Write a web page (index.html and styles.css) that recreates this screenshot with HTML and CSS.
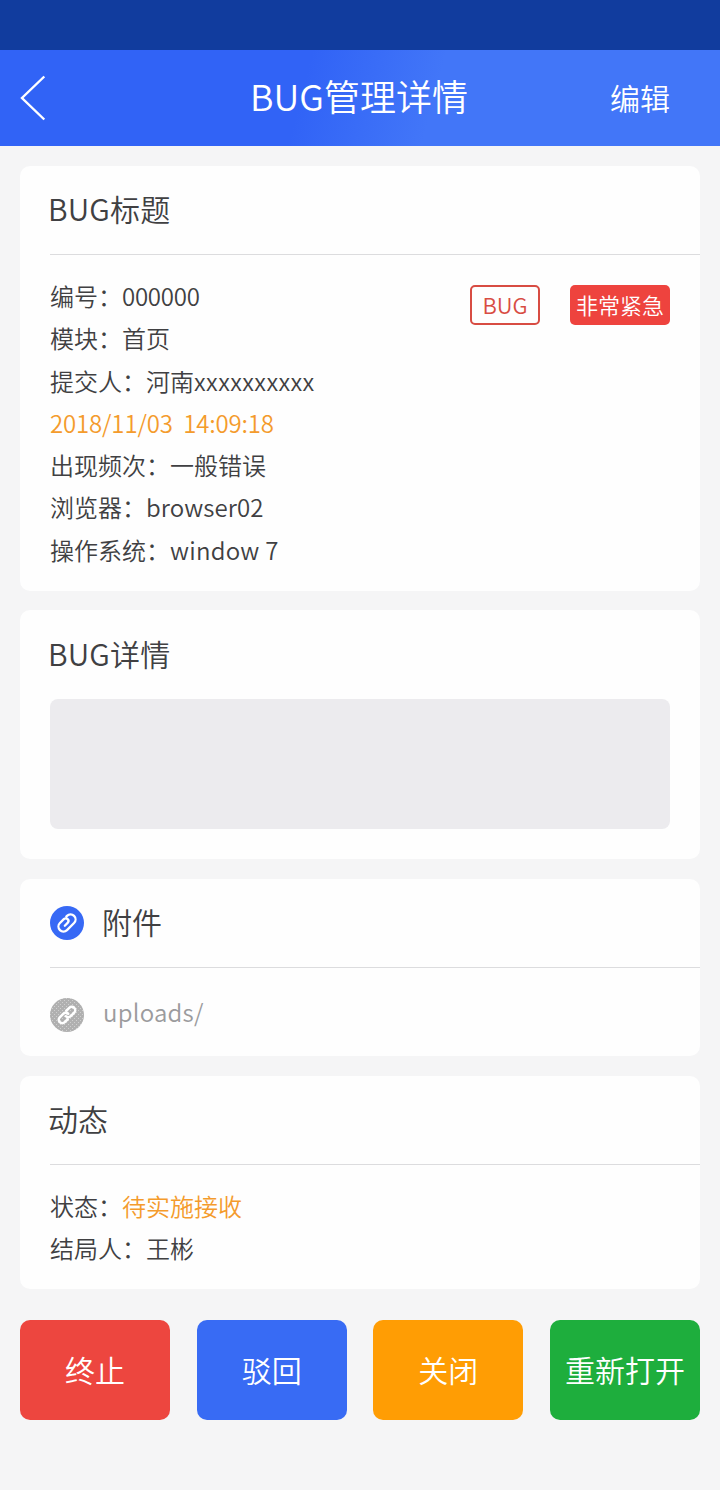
FILE: index.html
```html
<!DOCTYPE html>
<html lang="zh-CN">
<head>
<meta charset="utf-8">
<title>BUG管理详情</title>
<link rel="stylesheet" href="styles.css">
</head>
<body>
<div class="status-bar"></div>
<header class="nav">
  <svg class="back" viewBox="0 0 26 46" fill="none" stroke="#fff" stroke-width="2.4"><path d="M24.3 1.500 2 23l22.3 21.5"/></svg>
  <h1>BUG管理详情</h1>
  <span class="edit">编辑</span>
</header>
<main>
  <section class="card card-info">
    <h2>BUG标题</h2>
    <div class="body">
      <div class="rows">
        <p>编号：<span class="number">000000</span></p>
        <p>模块：首页</p>
        <p>提交人：河南<span class="submitter">xxxxxxxxxx</span></p>
        <p class="orange time">2018/11/03&nbsp; 14:09:18</p>
        <p>出现频次：一般错误</p>
        <p>浏览器：<span class="browser">browser02</span></p>
        <p>操作系统：<span class="os">window 7</span></p>
      </div>
      <div class="tags">
        <span class="tag outline">BUG</span>
        <span class="tag urgent">非常紧急</span>
      </div>
    </div>
  </section>
  <section class="card card-detail">
    <h2>BUG详情</h2>
    <div class="detail-box"></div>
  </section>
  <section class="card card-files">
    <h2 class="with-icon">
      <svg class="round" viewBox="0 0 34 34"><circle cx="17" cy="17" r="17" fill="#3769f5"/><path transform="rotate(-45 17 17)" d="M21 12H22a5 5 0 0 1 0 10H12a5 5 0 0 1 0-10h5.500a2.700 2.700 0 0 1 0 5.400H13.500" fill="none" stroke="#fff" stroke-width="2.300" stroke-linecap="round"/></svg>
      <span>附件</span>
    </h2>
    <div class="file">
      <svg class="round" viewBox="0 0 34 34">
        <defs><pattern id="dots" width="4" height="4" patternUnits="userSpaceOnUse"><rect width="4" height="4" fill="#b0b0b0"/><path d="M0 0h1v1H0zM2 2h1v1H2z" fill="#cfcfcf"/></pattern></defs>
        <circle cx="17" cy="17" r="17" fill="url(#dots)"/>
        <g transform="rotate(-45 17 17)" fill="none" stroke="#fff" stroke-width="2.500" stroke-linecap="round"><path d="M14.500 20.500H10.300a3.500 3.500 0 0 1 0-7H15.200a3.500 3.500 0 0 1 3.500 3.500"/><path d="M19.500 13.500h4.200a3.500 3.500 0 0 1 0 7H18.800a3.500 3.500 0 0 1-3.500-3.500"/></g>
      </svg>
      <span>uploads/</span>
    </div>
  </section>
  <section class="card card-activity">
    <h2>动态</h2>
    <div class="body">
      <div class="rows">
        <p>状态：<span class="orange">待实施接收</span></p>
        <p>结局人：王彬</p>
      </div>
    </div>
  </section>
  <div class="actions">
    <button class="red">终止</button>
    <button class="blue">驳回</button>
    <button class="amber">关闭</button>
    <button class="green">重新打开</button>
  </div>
</main>
</body>
</html>
```
FILE: styles.css
```css
* { box-sizing: border-box; margin: 0; padding: 0; }
body {
  width: 720px;
  height: 1490px;
  background: #f5f5f6;
  color: #404042;
  font-family: "Noto Sans CJK SC", sans-serif;
  font-weight: 350;
  overflow: hidden;
}
.status-bar { height: 50px; background: #113c9e; }
.nav {
  height: 96px;
  display: grid;
  grid-template-columns: 110px 1fr 110px;
  align-items: center;
  background: linear-gradient(105deg, #3163f6 0%, #3163f6 42%, #4276f8 60%, #4276f8 100%);
  color: #fff;
}
.back { width: 26px; height: 46px; margin-left: 20px; }
.nav h1 { font-size: 36px; font-weight: 350; text-align: center; line-height: 90px; padding: 0 2px 6px 0; }
.edit { font-size: 30px; line-height: 94px; padding-bottom: 2px; }
main { padding: 20px 20px 0; }
.card { background: #fefefe; border-radius: 10px; }
.card h2 {
  height: 89px;
  margin-left: 30px;
  border-bottom: 1px solid #dcdcde;
  font-size: 30px;
  font-weight: 350;
  line-height: 85px;
  text-indent: -2px;
}
.card-info h2, .card-detail h2 { letter-spacing: .15px; }
.card-info { height: 425px; }
.body { display: flex; justify-content: space-between; padding: 20px 30px 0; }
.rows { font-size: 24px; line-height: 42.3px; }
.orange { color: #f49b2c; }
.number { letter-spacing: -.25px; }
.submitter { letter-spacing: .4px; }
.time { letter-spacing: -.15px; }
.browser { letter-spacing: .1px; }
.os { letter-spacing: .25px; }
.tags { display: flex; gap: 30px; padding-top: 10px; }
.tag {
  height: 40px;
  border-radius: 5px;
  font-size: 22px;
  line-height: 38px;
  text-align: center;
}
.outline { width: 70px; border: 2px solid #d84c43; color: #d84c43; line-height: 34px; }
.urgent { width: 100px; background: #ee433e; color: #fff; }
.card-detail { height: 249px; margin-top: 19px; }
.card-detail h2 { border-bottom: 0; line-height: 87px; }
.detail-box { height: 130px; margin: 0 30px; border-radius: 8px; background: #ecebee; }
.card-files { height: 177px; margin-top: 20px; }
.card-files .with-icon { display: flex; align-items: center; gap: 20px; }
.with-icon span { padding-bottom: 4px; }
.round { width: 34px; height: 34px; flex: none; }
.file {
  display: flex;
  align-items: center;
  gap: 19px;
  height: 88px;
  padding: 6px 0 0 30px;
  color: #9b9b9d;
  font-size: 24px;
  letter-spacing: .25px;
}
.file span { padding-bottom: 7px; }
.card-activity { height: 213px; margin-top: 20px; }
.actions { display: flex; justify-content: space-between; margin-top: 31px; }
.actions button {
  width: 150px;
  height: 100px;
  border: 0;
  padding-bottom: 2px;
  border-radius: 10px;
  color: #fff;
  font: 350 30px/98px "Noto Sans CJK SC", sans-serif;
}
.red { background: #ed463f; }
.blue { background: #386bf4; }
.amber { background: #ff9d04; }
.green { background: #1eae3d; }
```
